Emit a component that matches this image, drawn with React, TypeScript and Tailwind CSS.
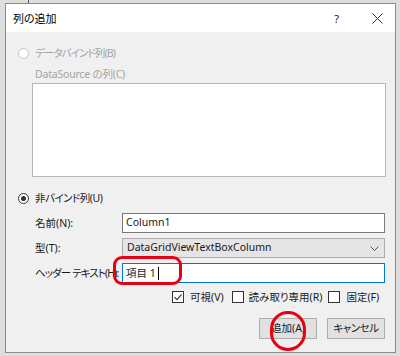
const font = "font-['Noto_Sans','Noto_Sans_CJK_JP',sans-serif] [font-feature-settings:'palt']";

function Radio({ checked, disabled }: { checked?: boolean; disabled?: boolean }) {
  return (
    <span
      className={`flex h-[11px] w-[11px] items-center justify-center rounded-full border bg-white ${
        disabled ? "border-[#c4c4c4]" : "border-[#333333]"
      }`}
    >
      {checked && <span className="h-[5px] w-[5px] rounded-full bg-[#333333]" />}
    </span>
  );
}

function Checkbox({ checked }: { checked?: boolean }) {
  return (
    <span className="flex h-[12px] w-[12px] items-center justify-center border border-[#333333] bg-white">
      {checked && (
        <svg width="10" height="10" viewBox="0 0 10 10" fill="none">
          <path d="M1.5 5.2 L4 7.6 L8.7 2.4" stroke="#333333" strokeWidth="1.1" />
        </svg>
      )}
    </span>
  );
}

function FieldRow({ label, tight, children }: { label: string; tight?: boolean; children: React.ReactNode }) {
  return (
    <div className="flex h-[20px] items-center">
      <span
        className={`box-content w-[87px] pl-[29px] text-[10.5px] leading-none whitespace-nowrap ${
          tight ? "tracking-[-0.9px]" : ""
        }`}
      >
        {label}
      </span>
      {children}
    </div>
  );
}

export default function App() {
  return (
    <div className={`relative h-[356px] w-[400px] overflow-hidden bg-[#dedede] pt-[3px] pl-[5px] ${font} text-[#1a1a1a]`}>
      {/* background window edge peeking above the dialog */}
      <div className="absolute top-0 left-[28px] h-[3px] w-px bg-[#555555]" />

      <div className="flex h-[350px] w-[391px] flex-col border border-[#8c8c8c] bg-[#f0f0f0]">
        {/* title bar */}
        <div className="flex h-[28px] items-center bg-white">
          <span className="ml-[7px] text-[11px] leading-none text-black">列の追加</span>
          <span className="ml-auto text-[11px] leading-none text-[#222222]">?</span>
          <svg className="mr-[12px] ml-[33px]" width="11" height="11" viewBox="0 0 11 11">
            <path d="M0.5 0.5 L10.5 10.5 M10.5 0.5 L0.5 10.5" stroke="#333333" strokeWidth="1" />
          </svg>
        </div>

        {/* data bound radio */}
        <div className="mt-[14px] flex h-[14px] items-center pl-[12px]">
          <Radio disabled />
          <span className="ml-[6px] text-[10.5px] leading-none tracking-[-0.9px] text-[#a3a3a3]">データバインド列(B)</span>
        </div>
        <div className="mt-[7px] flex h-[14px] items-center pl-[29px]">
          <span className="text-[10.5px] leading-none tracking-[-0.2px] text-[#a3a3a3]">DataSource の列(C)</span>
        </div>
        <div className="mt-[2px] ml-[26px] h-[94px] w-[354px] border border-[#b5b5b5] bg-white" />

        {/* unbound radio */}
        <div className="mt-[14px] flex h-[14px] items-center pl-[12px]">
          <Radio checked />
          <span className="ml-[6px] text-[10.5px] leading-none tracking-[-0.5px]">非バインド列(U)</span>
        </div>

        <div className="mt-[8px] flex flex-col gap-[5px]">
          <FieldRow label="名前(N):">
            <div className="flex h-[20px] w-[263px] items-center border border-[#7a7a7a] bg-white pl-[3px] text-[10.5px]">
              Column1
            </div>
          </FieldRow>
          <FieldRow label="型(T):">
            <div className="flex h-[20px] w-[263px] items-center border border-[#acacac] bg-[#e5e5e5] pl-[4px] text-[10.5px]">
              DataGridViewTextBoxColumn
              <svg className="mr-[5px] ml-auto" width="9" height="5" viewBox="0 0 9 5" fill="none">
                <path d="M0.5 0.5 L4.5 4.5 L8.5 0.5" stroke="#555555" strokeWidth="1" />
              </svg>
            </div>
          </FieldRow>
          <FieldRow label="ヘッダー テキスト(H):" tight>
            <div className="flex h-[20px] w-[263px] items-center border border-[#0078d7] bg-white pl-[3px] text-[10.5px]">
              <span className="leading-none">項目 1</span>
              <span className="ml-[2px] h-[13px] w-px bg-black" />
            </div>
          </FieldRow>
        </div>

        {/* checkboxes */}
        <div className="mt-[7px] flex h-[14px] items-center pl-[166px] text-[10.5px] leading-none">
          <Checkbox checked />
          <span className="ml-[6px]">可視(V)</span>
          <span className="ml-[8px]" />
          <Checkbox />
          <span className="ml-[5px]">読み取り専用(R)</span>
          <span className="ml-[6px]" />
          <Checkbox />
          <span className="ml-[6px]">固定(F)</span>
        </div>

        {/* buttons */}
        <div className="mt-[14px] flex justify-end gap-[10px] pr-[10px]">
          <button className="flex h-[21px] w-[58px] items-center justify-center border border-[#adadad] bg-[#e1e1e1] text-[10.5px] leading-none">
            追加(A)
          </button>
          <button className="flex h-[21px] w-[58px] items-center justify-center border border-[#adadad] bg-[#e1e1e1] text-[10.5px] leading-none tracking-[-0.5px]">
            キャンセル
          </button>
        </div>
      </div>

      {/* red annotations */}
      <div className="absolute top-[256px] left-[113px] h-[29px] w-[69px] rounded-[9px] border-[3px] border-[#e60012]" />
      <div className="absolute top-[311px] left-[270px] h-[40px] w-[36px] rounded-full border-[3px] border-[#e60012]" />
    </div>
  );
}
